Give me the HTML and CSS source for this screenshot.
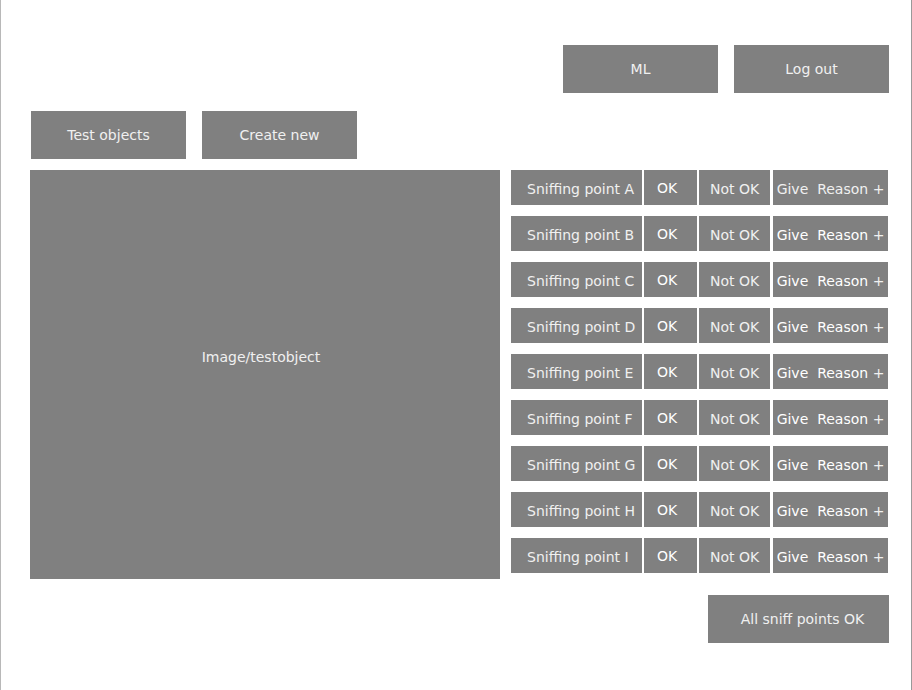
FILE: index.html
```html
<!DOCTYPE html>
<html lang="en">
<head>
<meta charset="utf-8">
<meta name="viewport" content="width=device-width, initial-scale=1">
<title>Sniff test</title>
<link rel="stylesheet" href="styles.css">
</head>
<body>
<div class="page">
  <header class="account">
    <button class="btn" type="button">ML</button>
    <button class="btn" type="button">Log out</button>
  </header>
  <nav class="tabs">
    <button class="btn" type="button">Test objects</button>
    <button class="btn" type="button">Create new</button>
  </nav>
  <main class="workspace">
    <section class="preview">Image/testobject</section>
    <ul class="points">
      <li class="point"><span class="name">Sniffing point A</span><button class="ok" type="button">OK</button><button class="not-ok" type="button">Not OK</button><button class="reason" type="button">Give  Reason +</button></li>
      <li class="point"><span class="name">Sniffing point B</span><button class="ok" type="button">OK</button><button class="not-ok" type="button">Not OK</button><button class="reason" type="button"><span class="strong">Give  Reason</span> +</button></li>
      <li class="point"><span class="name">Sniffing point C</span><button class="ok" type="button">OK</button><button class="not-ok" type="button">Not OK</button><button class="reason" type="button"><span class="strong">Give  Reason</span> +</button></li>
      <li class="point"><span class="name">Sniffing point D</span><button class="ok" type="button">OK</button><button class="not-ok" type="button">Not OK</button><button class="reason" type="button"><span class="strong">Give  Reason</span> +</button></li>
      <li class="point"><span class="name">Sniffing point E</span><button class="ok" type="button">OK</button><button class="not-ok" type="button">Not OK</button><button class="reason" type="button"><span class="strong">Give  Reason</span> +</button></li>
      <li class="point"><span class="name">Sniffing point F</span><button class="ok" type="button">OK</button><button class="not-ok" type="button">Not OK</button><button class="reason" type="button"><span class="strong">Give  Reason</span> +</button></li>
      <li class="point"><span class="name">Sniffing point G</span><button class="ok" type="button">OK</button><button class="not-ok" type="button">Not OK</button><button class="reason" type="button"><span class="strong">Give  Reason</span> +</button></li>
      <li class="point"><span class="name">Sniffing point H</span><button class="ok" type="button">OK</button><button class="not-ok" type="button">Not OK</button><button class="reason" type="button"><span class="strong">Give  Reason</span> +</button></li>
      <li class="point"><span class="name">Sniffing point I</span><button class="ok" type="button">OK</button><button class="not-ok" type="button">Not OK</button><button class="reason" type="button"><span class="strong">Give  Reason</span> +</button></li>
    </ul>
  </main>
  <footer class="actions">
    <button class="btn btn-all" type="button">All sniff points OK</button>
  </footer>
</div>
</body>
</html>
```
FILE: styles.css
```css
* {
  box-sizing: border-box;
}

body {
  margin: 0;
  background: #fff;
  color: #f0f0f0;
  font: 14px/18px "DejaVu Sans", sans-serif;
}

button {
  margin: 0;
  padding: 0;
  border: 0;
  background: #808080;
  color: inherit;
  font: inherit;
  white-space: pre;
  cursor: pointer;
}

.page {
  min-height: 100vh;
  padding: 45px 22px 45px 29px;
  border-left: 1px solid #b8b8b8;
  border-right: 1px solid #999;
}

.account,
.tabs {
  display: flex;
  gap: 16px;
}

.account {
  justify-content: flex-end;
  margin-bottom: 18px;
}

.tabs {
  margin-bottom: 11px;
  padding-left: 1px;
}

.btn {
  width: 155px;
  height: 48px;
}

.workspace {
  display: grid;
  grid-template-columns: 470fr 377fr;
  gap: 11px;
  padding-right: 1px;
}

.preview {
  display: flex;
  align-items: center;
  justify-content: center;
  padding: 0 8px 36px 0;
  background: #808080;
}

.points {
  display: grid;
  gap: 11px;
  margin: 0;
  padding: 0 0 6px;
  list-style: none;
}

.point {
  display: grid;
  grid-template-columns: 131fr 53fr 71fr 116fr;
  gap: 2px;
  height: 35px;
}

.name,
.not-ok,
.reason {
  padding-top: 3px;
}

.name {
  display: flex;
  align-items: center;
  padding-left: 16px;
  background: #808080;
  white-space: nowrap;
}

.ok {
  padding-left: 13px;
  padding-top: 1px;
  color: #fff;
  text-align: left;
}

.reason {
  margin-left: 1px;
}

.strong {
  color: #fff;
}

.actions {
  display: flex;
  justify-content: flex-end;
  margin-top: 16px;
}

.btn-all {
  width: 181px;
  padding-left: 8px;
}
```
